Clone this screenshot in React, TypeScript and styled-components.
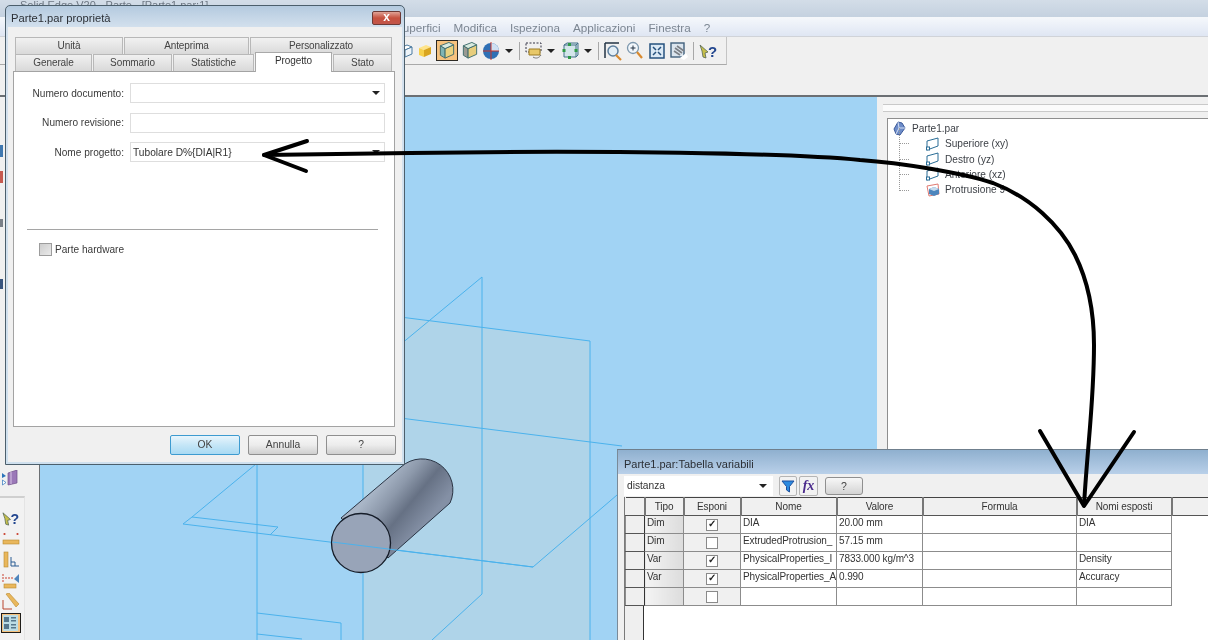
import React from "react";
import styled, { createGlobalStyle } from "styled-components";

const Global = createGlobalStyle`
  html, body { margin: 0; padding: 0; background: #f0f0f0; overflow: hidden; }
  #root { width: 1208px; height: 640px; }
`;

const Desktop = styled.div`
  position: relative;
  width: 1208px;
  height: 640px;
  overflow: hidden;
  display: flex;
  flex-direction: column;
  background: #f0f0f0;
  font-family: "Liberation Sans", Arial, sans-serif;
  font-size: 10px;
  color: #333;
  filter: blur(0.4px);
`;

/* ---------- main application chrome ---------- */
const AppTitle = styled.div`
  height: 17px;
  flex: none;
  padding: 0 0 0 20px;
  background: linear-gradient(#d3dde8, #c4d1df);
  border-bottom: 1px solid #f4f7fa;
  color: #6d7783;
  font-size: 11px;
  line-height: 11px;
  white-space: nowrap;
`;
const MenuBar = styled.div`
  height: 18px;
  flex: none;
  display: flex;
  align-items: center;
  gap: 13px;
  padding-left: 395px;
  background: linear-gradient(#f4f7fb, #dfe6f3);
  border-bottom: 1px solid #d0d3d8;
  color: #7c8692;
  font-size: 11.7px;
`;
const ToolBand = styled.div`
  height: 60px;
  flex: none;
  background: #f0f0f0;
  border-bottom: 2px solid #6b6f73;
  box-sizing: border-box;
`;
const Toolbar = styled.div`
  width: 727px;
  height: 28px;
  box-sizing: border-box;
  display: flex;
  justify-content: flex-end;
  align-items: center;
  padding-right: 7px;
  border-right: 1px solid #c4c4c4;
  border-bottom: 1px solid #a9a9a9;
`;
const Slot = styled.div<{ $w: number; $on?: boolean }>`
  width: ${(p) => p.$w}px;
  height: 21px;
  flex: none;
  box-sizing: border-box;
  display: flex;
  align-items: center;
  justify-content: center;
  ${(p) => p.$on && `background:#f6c27e;border:1px solid #2d2a24;margin:0 2px 0 1px;`}
`;
const Sep = styled.div`
  width: 1px;
  height: 18px;
  margin: 0 3px;
  flex: none;
  background: #a8a8a8;
`;
const Drop = styled.div`
  width: 14px;
  flex: none;
  display: flex;
  justify-content: center;
  &::after {
    content: "";
    border-left: 4px solid transparent;
    border-right: 4px solid transparent;
    border-top: 4px solid #222;
  }
`;

const Workspace = styled.div`
  flex: 1;
  min-height: 0;
  display: flex;
`;
const LeftStrip = styled.div`
  width: 40px;
  flex: none;
  box-sizing: border-box;
  display: flex;
  flex-direction: column;
  align-items: flex-start;
  border-right: 1px solid #6b6f73;
  background: #f0f0f0;
  padding-top: 48px;
`;
const EdgeMark = styled.div<{ $c: string; $h: number; $mb: number }>`
  width: 3px;
  height: ${(p) => p.$h}px;
  margin-bottom: ${(p) => p.$mb}px;
  background: ${(p) => p.$c};
  flex: none;
`;
const ToolPalette = styled.div`
  width: 25px;
  flex: 1;
  margin-top: 8px;
  box-sizing: border-box;
  border-top: 2px solid #cfcfcf;
  border-right: 1px solid #e4e4e4;
  display: flex;
  flex-direction: column;
  align-items: center;
  padding: 10px 3px 0 0;
  gap: 1px;
  background: #f2f2f2;
`;
const PaletteBtn = styled.div<{ $on?: boolean }>`
  width: 20px;
  height: 20px;
  flex: none;
  box-sizing: border-box;
  display: flex;
  align-items: center;
  justify-content: center;
  ${(p) => p.$on && `background:#f6c27e;border:1px solid #1f1c18;`}
`;
const CanvasArea = styled.div`
  flex: 1;
  min-width: 0;
  background: #a1d3f4;
  position: relative;
`;
const CanvasSvg = styled.svg`
  display: block;
  width: 100%;
  height: 100%;
`;
const SidePanel = styled.div`
  width: 331px;
  flex: none;
  box-sizing: border-box;
  padding: 7px 0 0 10px;
  display: flex;
  flex-direction: column;
  background: #f0f0f0;
`;
const Grip = styled.div`
  height: 6px;
  margin-left: -4px;
  margin-bottom: 6px;
  flex: none;
  border-top: 1px solid #c9c9c9;
  border-bottom: 1px solid #c9c9c9;
  background: #fbfbfb;
`;
const TreeBox = styled.div`
  flex: 1;
  background: #fff;
  border-top: 1px solid #8e8e8e;
  border-left: 1px solid #8e8e8e;
  padding: 2px 0 0 5px;
  position: relative;
  font-size: 10.1px;
  color: #3b3f45;
`;
const TreeRoot = styled.div`
  display: flex;
  align-items: center;
  gap: 6px;
  height: 15px;
`;
const TreeChild = styled.div`
  display: flex;
  align-items: center;
  gap: 5px;
  height: 15.4px;
  margin-left: 33px;
  position: relative;
  &::before {
    content: "";
    position: absolute;
    left: -27px;
    top: -8px;
    bottom: 7px;
    width: 9px;
    border-left: 1px dotted #999;
    border-bottom: 1px dotted #999;
  }
`;

/* ---------- properties dialog ---------- */
const Dialog = styled.div`
  position: absolute;
  left: 5px;
  top: 5px;
  width: 400px;
  height: 460px;
  box-sizing: border-box;
  border: 1px solid #4c5f6c;
  border-radius: 5px 5px 0 0;
  background: linear-gradient(#b4cadf, #d4e1ee 22px, #cfe0ee);
  padding: 0 2px 2px;
  display: flex;
  flex-direction: column;
`;
const DialogTitle = styled.div`
  height: 21px;
  flex: none;
  box-sizing: border-box;
  display: flex;
  align-items: center;
  justify-content: space-between;
  padding: 2px 1px 0 3px;
  font-size: 11.2px;
  color: #2b2f35;
`;
const CloseBtn = styled.div`
  width: 29px;
  height: 14px;
  box-sizing: border-box;
  border: 1px solid #6d3a36;
  border-radius: 2px;
  background: linear-gradient(#e0a397, #c6513f 50%, #c2564a);
  color: #fff;
  font-size: 12px;
  font-weight: bold;
  line-height: 11px;
  text-align: center;
`;
const DialogBody = styled.div`
  flex: 1;
  min-height: 0;
  background: #f0f0f0;
  padding: 10px 7px 7px 5px;
  display: flex;
  flex-direction: column;
`;
const TabRow = styled.div`
  display: flex;
  height: 17px;
  flex: none;
  padding: 0 1px 0 2px;
  gap: 1px;
  position: relative;
`;
const Tab = styled.div<{ $w: number; $active?: boolean }>`
  width: ${(p) => p.$w}px;
  flex: none;
  box-sizing: border-box;
  text-align: center;
  font-size: 10px;
  letter-spacing: -0.1px;
  color: #444;
  border: 1px solid #b8b8b8;
  border-bottom: none;
  line-height: 16px;
  background: linear-gradient(#f1f1f1, #d9d9d9);
  ${(p) =>
    p.$active &&
    `background:#fff;height:20px;margin-top:-2px;line-height:15px;position:relative;z-index:1;color:#333;border-color:#a9a9a9;`}
`;
const Page = styled.div`
  flex: 1;
  background: #fff;
  border: 1px solid #a3a3a3;
  padding: 11px 9px 0 13px;
  position: relative;
`;
const FieldGrid = styled.div`
  display: grid;
  grid-template-columns: 97px 255px;
  column-gap: 6px;
  row-gap: 9.5px;
  align-items: center;
`;
const FieldLabel = styled.div`
  text-align: right;
  font-size: 10.1px;
  color: #3a3a3a;
  white-space: nowrap;
`;
const Field = styled.div`
  height: 20px;
  box-sizing: border-box;
  border: 1px solid #dedede;
  padding: 0 2px;
  display: flex;
  align-items: center;
  font-size: 10.2px;
  color: #333;
  white-space: nowrap;
  &[data-drop="yes"]::after {
    content: "";
    margin-left: auto;
    border-left: 4px solid transparent;
    border-right: 4px solid transparent;
    border-top: 4px solid #222;
    margin-right: 2px;
  }
`;
const Divider = styled.div`
  height: 1px;
  background: #a5a5a5;
  margin: 67px 7px 0 0;
`;
const CheckRow = styled.div`
  margin: 13px 0 0 12px;
  display: flex;
  align-items: center;
  gap: 3px;
  font-size: 10.1px;
  color: #3a3a3a;
`;
const GreyCheck = styled.div`
  width: 13px;
  height: 13px;
  box-sizing: border-box;
  border: 1px solid #9c9c9c;
  background: linear-gradient(135deg, #cdcdcd, #eaeaea);
`;
const DialogButtons = styled.div`
  flex: none;
  display: flex;
  justify-content: flex-end;
  gap: 8px;
  padding-top: 8px;
  margin-right: -1px;
`;
const PushBtn = styled.div<{ $def?: boolean }>`
  width: 70px;
  height: 20px;
  box-sizing: border-box;
  border: 1px solid ${(p) => (p.$def ? "#3d9bd0" : "#8f8f8f")};
  border-radius: 2px;
  background: ${(p) =>
    p.$def
      ? "linear-gradient(#e8f5fc 0,#c5e6f7 50%,#a9daf3 100%)"
      : "linear-gradient(#f7f7f7,#ececec 50%,#cfcfcf)"};
  text-align: center;
  line-height: 18px;
  font-size: 10.3px;
  color: #444;
`;

/* ---------- variable table window ---------- */
const VarWindow = styled.div`
  position: absolute;
  left: 617px;
  top: 449px;
  width: 591px;
  height: 191px;
  box-sizing: border-box;
  border-left: 1px solid #7a8a98;
  border-top: 1px solid #6f7f8d;
  display: flex;
  flex-direction: column;
  background: #f0f0f0;
`;
const VarTitle = styled.div`
  height: 24px;
  flex: none;
  box-sizing: border-box;
  padding: 8px 0 0 6px;
  font-size: 11px;
  color: #2b2f35;
  background: linear-gradient(#8fb0cf, #b9d0e9);
`;
const VarTools = styled.div`
  height: 23px;
  flex: none;
  display: flex;
  align-items: center;
  padding-left: 6px;
`;
const Combo = styled.div`
  width: 149px;
  height: 20px;
  box-sizing: border-box;
  background: #fff;
  padding: 0 6px 0 3px;
  display: flex;
  align-items: center;
  justify-content: space-between;
  font-size: 10.2px;
  color: #333;
  margin-right: 6px;
  &::after {
    content: "";
    border-left: 4px solid transparent;
    border-right: 4px solid transparent;
    border-top: 4px solid #222;
  }
`;
const IconBtn = styled.div`
  width: 18px;
  height: 20px;
  margin-right: 2px;
  box-sizing: border-box;
  border: 1px solid #b5b5b5;
  border-radius: 2px;
  background: #f2f2f2;
  display: flex;
  align-items: center;
  justify-content: center;
`;
const FxBtn = styled(IconBtn)`
  width: 19px;
  font-family: "Liberation Serif", serif;
  font-style: italic;
  font-weight: bold;
  font-size: 14px;
  color: #4a2a8c;
`;
const HelpBtn = styled.div`
  width: 38px;
  height: 18px;
  margin-left: 5px;
  box-sizing: border-box;
  border: 1px solid #8f8f8f;
  border-radius: 3px;
  background: linear-gradient(#f7f7f7, #d4d4d4);
  text-align: center;
  line-height: 16px;
  font-size: 10.5px;
  color: #444;
`;
const GridArea = styled.div`
  flex: 1;
  margin-left: 6px;
  min-height: 0;
  border-left: 1px solid #7a7a7a;
  background: linear-gradient(90deg, #efefef 18px, #333 18px, #333 19px, #fff 19px);
`;
const VarTable = styled.table`
  border-collapse: collapse;
  table-layout: fixed;
  width: 584px;
  font-size: 10px;
  letter-spacing: -0.1px;
  color: #333;
`;
const HeadCell = styled.th<{ $plain?: boolean }>`
  height: 18px;
  padding: 0;
  font-weight: normal;
  text-align: center;
  box-sizing: border-box;
  border-top: 1px solid #444;
  border-bottom: 1px solid #555;
  border-right: ${(p) => (p.$plain ? "none" : "2px solid #777")};
  background: #f0f0f0;
`;
const Cell = styled.td<{ $kind?: "type" | "check" | "head" }>`
  height: 18px;
  padding: 0 2px;
  vertical-align: top;
  line-height: 14px;
  box-sizing: border-box;
  overflow: hidden;
  white-space: nowrap;
  border: 1px solid #8c8c8c;
  border-top: none;
  background: ${(p) =>
    p.$kind === "type"
      ? "linear-gradient(90deg,#f4f4f4,#dcdcdc)"
      : p.$kind === "check"
      ? "#f0f0f0"
      : p.$kind === "head"
      ? "#efefef"
      : "#fff"};
  ${(p) => p.$kind === "check" && "text-align:center;padding-top:3px;"}
  ${(p) => p.$kind === "head" && "border-right:1px solid #333;border-bottom:1px solid #555;"}
`;
const Tick = styled.span<{ $on?: boolean }>`
  display: inline-block;
  width: 10px;
  height: 10px;
  border: 1px solid #8a8a8a;
  background: #fff;
  position: relative;
  vertical-align: top;
  &::after {
    content: ${(p) => (p.$on ? '"✓"' : '""')};
    position: absolute;
    left: 1px;
    top: -2px;
    font-size: 10px;
    font-weight: bold;
    line-height: 12px;
    color: #222;
  }
`;
const Overlay = styled.svg`
  position: absolute;
  left: 0;
  top: 0;
  width: 1208px;
  height: 640px;
  pointer-events: none;
`;

/* ---------- icons ---------- */
const Cube = ({ top = "#ffe48a", left = "#f7d14c", right = "#d9a520", stroke = "none" }) => (
  <svg width="16" height="16" viewBox="0 0 16 16">
    <path d="M2 5 L9 2 L14 4 L7 7Z" fill={top} stroke={stroke} />
    <path d="M2 5 L7 7 L7 14 L2 12Z" fill={left} stroke={stroke} />
    <path d="M7 7 L14 4 L14 11 L7 14Z" fill={right} stroke={stroke} />
  </svg>
);
const ShadedBox = ({ front = "#e9d27f", side = "#7fb4b4" }) => (
  <svg width="18" height="19" viewBox="0 0 18 20">
    <path d="M2 5 L7 8 L7 18 L2 15Z" fill={side} stroke="#3f6d6d" />
    <path d="M7 8 L16 4 L16 14 L7 18Z" fill={front} stroke="#3f6d6d" />
    <path d="M2 5 L11 1.5 L16 4 L7 8Z" fill="#d8eadf" stroke="#3f6d6d" />
  </svg>
);
const Sphere = () => (
  <svg width="18" height="18" viewBox="0 0 18 18">
    <circle cx="9" cy="9" r="8" fill="#2f70b5" />
    <path d="M9 1 A8 8 0 0 1 17 9 L9 9Z" fill="#cfe0f2" />
    <path d="M9 0 V18 M1 9 H17" stroke="#c8362d" strokeWidth="1" />
  </svg>
);
const SelectBox = () => (
  <svg width="18" height="18" viewBox="0 0 18 18">
    <rect x="1" y="1" width="15" height="9" fill="none" stroke="#334" strokeDasharray="2 1.5" />
    <path d="M4 7 H15 V13 H4Z" fill="#e8c868" stroke="#9a7b22" />
    <path d="M8 15 C11 17 14 16 16 13" fill="none" stroke="#777" />
  </svg>
);
const GreenCube = () => (
  <svg width="18" height="18" viewBox="0 0 18 18">
    <path d="M3 3 H15 V15 H3Z M3 3 L6 1 H17 V13 L15 15 M15 3 L17 1" fill="#d4e6ea" stroke="#44708a" />
    <g fill="#2f9a45">
      <rect x="1.5" y="7" width="3" height="3" />
      <rect x="13.5" y="7" width="3" height="3" />
      <rect x="7" y="1" width="3" height="3" />
      <rect x="7" y="14" width="3" height="3" />
    </g>
  </svg>
);
const ZoomArea = () => (
  <svg width="18" height="20" viewBox="0 0 18 20">
    <path d="M1 2 H15 M1 2 V17" stroke="#234" strokeWidth="1.5" fill="none" />
    <circle cx="9" cy="10" r="5" fill="#e3eef6" stroke="#5d7f9e" strokeWidth="1.5" />
    <path d="M12 14 L17 19" stroke="#d98a2f" strokeWidth="2.2" />
  </svg>
);
const Magnifier = () => (
  <svg width="18" height="20" viewBox="0 0 18 20">
    <circle cx="7" cy="7" r="5.5" fill="#f2f7fb" stroke="#7c97ad" strokeWidth="1.3" />
    <path d="M4.5 7 H9.5 M7 4.5 V9.5" stroke="#234" />
    <path d="M11 11 L16 17" stroke="#d98a2f" strokeWidth="2.2" />
  </svg>
);
const Fit = () => (
  <svg width="16" height="16" viewBox="0 0 16 16">
    <rect x="1" y="1" width="14" height="14" fill="#dbe9f5" stroke="#26517e" strokeWidth="1.5" />
    <path d="M4 4 L7 7 M12 4 L9 7 M4 12 L7 9 M12 12 L9 9" stroke="#26517e" strokeWidth="1.5" />
  </svg>
);
const Spin = () => (
  <svg width="18" height="18" viewBox="0 0 18 18">
    <rect x="1" y="1" width="13" height="14" fill="#dbe5ee" stroke="#40607c" strokeWidth="1.4" />
    <path d="M5 6 L12 11 M4 9 L10 13 M7 4 L14 9" stroke="#7b7f85" strokeWidth="1.6" />
    <path d="M10 16 L16 11 L18 15 L14 18Z" fill="#fff" />
  </svg>
);
const HelpArrow = ({ size = 18 }) => (
  <svg width={size} height={size} viewBox="0 0 18 18">
    <path d="M1 3 L9 10 L6 11 L7 16 L4 15 L3 9Z" fill="#c7c04a" stroke="#565" strokeWidth="0.8" />
    <text x="9" y="15" fontSize="15" fontWeight="bold" fill="#22468f" fontFamily="Liberation Sans, sans-serif">
      ?
    </text>
  </svg>
);
const PurpleBook = () => (
  <svg width="16" height="16" viewBox="0 0 16 16">
    <path d="M6 3 L15 0 V13 L6 15Z" fill="#9b78b8" stroke="#6e4f8a" strokeWidth="0.7" />
    <path d="M9 2 V14" stroke="#d7c6e5" />
    <path d="M0 3 L4 6 L0 8Z" fill="#2a73ba" />
    <path d="M0.5 10 L4 12.5 L0.5 15Z" fill="#fff" stroke="#2a73ba" strokeWidth="0.7" />
  </svg>
);
const RulerA = () => (
  <svg width="18" height="16" viewBox="0 0 18 16">
    <rect x="1" y="9" width="16" height="4" fill="#e9b75c" stroke="#b98a30" strokeWidth="0.6" />
    <circle cx="2.5" cy="3" r="1.1" fill="#c9402f" />
    <circle cx="15.5" cy="3" r="1.1" fill="#c9402f" />
  </svg>
);
const RulerB = () => (
  <svg width="18" height="18" viewBox="0 0 18 18">
    <rect x="2" y="1" width="4" height="15" fill="#e9b75c" stroke="#b98a30" strokeWidth="0.6" />
    <path d="M9 6 V15 H17 M9 11 H13 V15" fill="none" stroke="#2a5d93" />
  </svg>
);
const RulerC = () => (
  <svg width="18" height="18" viewBox="0 0 18 18">
    <rect x="2" y="12" width="12" height="4" fill="#e9b75c" stroke="#b98a30" strokeWidth="0.6" />
    <path d="M1 2 V11 M3 6 H12" stroke="#c9402f" strokeDasharray="2 1" />
    <path d="M17 2 L12 7 L17 11Z" fill="#4f86bd" />
  </svg>
);
const RulerD = () => (
  <svg width="18" height="18" viewBox="0 0 18 18">
    <path d="M4 1 L7 0 L17 11 L14 14Z" fill="#e9b75c" stroke="#b98a30" strokeWidth="0.6" />
    <path d="M1 7 V16 H10" fill="none" stroke="#b9442f" />
  </svg>
);
const Matrix = () => (
  <svg width="15" height="16" viewBox="0 0 15 16">
    <rect width="15" height="16" fill="#bcdde5" />
    <g fill="#35566e" fillOpacity="0.75">
      <rect x="1" y="2" width="5" height="5" />
      <rect x="8" y="2" width="5" height="1.5" />
      <rect x="8" y="5" width="5" height="1.5" />
      <rect x="1" y="9" width="5" height="5" />
      <rect x="8" y="9" width="5" height="1.5" />
      <rect x="8" y="12" width="5" height="1.5" />
    </g>
  </svg>
);
const PartIcon = () => (
  <svg width="13" height="15" viewBox="0 0 13 15">
    <path d="M1 8 L5 1 L9 2 L12 7 L7 14 L3 13Z" fill="#6d8cc9" stroke="#3c5a99" />
    <path d="M5 1 L6 7 L3 13 M6 7 L12 7" fill="none" stroke="#d5e0f3" />
  </svg>
);
const PlaneIcon = () => (
  <svg width="14" height="14" viewBox="0 0 14 14">
    <path d="M1 4 L12 1 V9 L1 13Z" fill="#fff" stroke="#2a6d96" />
    <rect x="0.5" y="10" width="3" height="3" fill="#fff" stroke="#2a6d96" />
  </svg>
);
const ProtrusionIcon = () => (
  <svg width="14" height="14" viewBox="0 0 14 14">
    <path d="M1 3 L12 1 L13 11 L3 13Z" fill="#fff" stroke="#e07a72" />
    <path d="M3 6 L8 4 L13 6 V11 L8 13 L3 11Z" fill="#4d86bd" />
    <path d="M3 6 L8 4 L13 6 L8 8Z" fill="#c7dcee" />
  </svg>
);
const FilterIcon = () => (
  <svg width="14" height="14" viewBox="0 0 14 14">
    <path d="M1 2 H13 L8.5 7.5 V13 L5.5 11 V7.5Z" fill="#2c8be0" stroke="#1d4f9c" />
  </svg>
);

const rows: { tipo: string; on: boolean; nome: string; val: string; exp: string }[] = [
  { tipo: "Dim", on: true, nome: "DIA", val: "20.00 mm", exp: "DIA" },
  { tipo: "Dim", on: false, nome: "ExtrudedProtrusion_", val: "57.15 mm", exp: "" },
  { tipo: "Var", on: true, nome: "PhysicalProperties_I", val: "7833.000 kg/m^3", exp: "Density" },
  { tipo: "Var", on: true, nome: "PhysicalProperties_A", val: "0.990", exp: "Accuracy" },
  { tipo: "", on: false, nome: "", val: "", exp: "" },
];

const line = "#4bb2ec";

export default function App() {
  return (
    <Desktop>
      <Global />
      <AppTitle>Solid Edge V20 - Parte - [Parte1.par:1]</AppTitle>
      <MenuBar>
        <span>Superfici</span>
        <span>Modifica</span>
        <span>Ispeziona</span>
        <span>Applicazioni</span>
        <span>Finestra</span>
        <span>?</span>
      </MenuBar>
      <ToolBand>
        <Toolbar>
          <Slot $w={18}><Cube top="#fff" left="#dbe8f2" right="#eef4f9" stroke="#4a7aa0" /></Slot>
          <Slot $w={20}><Cube /></Slot>
          <Slot $w={22} $on><ShadedBox /></Slot>
          <Slot $w={20}><ShadedBox front="#e7cd7c" side="#9a9a92" /></Slot>
          <Slot $w={22}><Sphere /></Slot>
          <Drop />
          <Sep />
          <Slot $w={21}><SelectBox /></Slot>
          <Drop />
          <Slot $w={23}><GreenCube /></Slot>
          <Drop />
          <Sep />
          <Slot $w={22}><ZoomArea /></Slot>
          <Slot $w={22}><Magnifier /></Slot>
          <Slot $w={22}><Fit /></Slot>
          <Slot $w={22}><Spin /></Slot>
          <Sep />
          <Slot $w={22}><HelpArrow /></Slot>
        </Toolbar>
      </ToolBand>
      <Workspace>
        <LeftStrip>
          <EdgeMark $c="#3f78b0" $h={12} $mb={14} />
          <EdgeMark $c="#c65a50" $h={12} $mb={36} />
          <EdgeMark $c="#7a8088" $h={8} $mb={52} />
          <EdgeMark $c="#39557e" $h={10} $mb={179} />
          <PaletteBtn><PurpleBook /></PaletteBtn>
          <ToolPalette>
            <PaletteBtn><HelpArrow size={17} /></PaletteBtn>
            <PaletteBtn><RulerA /></PaletteBtn>
            <PaletteBtn><RulerB /></PaletteBtn>
            <PaletteBtn><RulerC /></PaletteBtn>
            <PaletteBtn><RulerD /></PaletteBtn>
            <PaletteBtn $on><Matrix /></PaletteBtn>
          </ToolPalette>
        </LeftStrip>
        <CanvasArea>
          <CanvasSvg viewBox="40 97 837 543" preserveAspectRatio="none">
            <path d="M400 317 L590 341 V640 H363 V440 H400Z" fill="#d2d6d2" fillOpacity="0.3" />
            <g fill="none" stroke={line} strokeWidth="1">
              <path d="M482 277 V594 L432 640" />
              <path d="M482 277 L192 517 L183 524 L533 567 L617 495" />
              <path d="M192 517 L278 527 L270 535" />
              <path d="M400 317 L590 341 V640" />
              <path d="M400 418 L622 446" />
              <path d="M257 440 V640" />
              <path d="M363 440 V640" />
              <path d="M257 613 L341 623 V640" />
              <path d="M257 634 L302 639" />
            </g>
            <defs>
              <linearGradient id="cyl" gradientUnits="userSpaceOnUse" x1="372" y1="492" x2="419" y2="531">
                <stop offset="0" stopColor="#a9b6c7" />
                <stop offset="0.3" stopColor="#8d99ab" />
                <stop offset="0.6" stopColor="#667184" />
                <stop offset="1" stopColor="#8490a5" />
              </linearGradient>
            </defs>
            <path
              d="M341 518 L401 467 A31 31 0 0 1 450 503 L388 558Z"
              fill="url(#cyl)"
              stroke="#2a3444"
              strokeWidth="1"
            />
            <ellipse
              cx="361"
              cy="543"
              rx="29.5"
              ry="29.5"
              fill="#98a4b8"
              stroke="#151c28"
              strokeWidth="1.3"
            />
            <path d="M332 542 L533 567" stroke={line} fill="none" />
          </CanvasSvg>
        </CanvasArea>
        <SidePanel>
          <Grip />
          <TreeBox>
            <TreeRoot>
              <PartIcon />
              <span>Parte1.par</span>
            </TreeRoot>
            <TreeChild>
              <PlaneIcon />
              <span>Superiore (xy)</span>
            </TreeChild>
            <TreeChild>
              <PlaneIcon />
              <span>Destro (yz)</span>
            </TreeChild>
            <TreeChild>
              <PlaneIcon />
              <span>Anteriore (xz)</span>
            </TreeChild>
            <TreeChild>
              <ProtrusionIcon />
              <span>Protrusione 9</span>
            </TreeChild>
          </TreeBox>
        </SidePanel>
      </Workspace>

      <Dialog>
        <DialogTitle>
          <span>Parte1.par proprietà</span>
          <CloseBtn>x</CloseBtn>
        </DialogTitle>
        <DialogBody>
          <TabRow>
            <Tab $w={108}>Unità</Tab>
            <Tab $w={125}>Anteprima</Tab>
            <Tab $w={142}>Personalizzato</Tab>
          </TabRow>
          <TabRow>
            <Tab $w={77}>Generale</Tab>
            <Tab $w={79}>Sommario</Tab>
            <Tab $w={81}>Statistiche</Tab>
            <Tab $w={77} $active>Progetto</Tab>
            <Tab $w={59}>Stato</Tab>
          </TabRow>
          <Page>
            <FieldGrid>
              <FieldLabel>Numero documento:</FieldLabel>
              <Field data-drop="yes" />
              <FieldLabel>Numero revisione:</FieldLabel>
              <Field />
              <FieldLabel>Nome progetto:</FieldLabel>
              <Field data-drop="yes">Tubolare D%{"{"}DIA|R1{"}"}</Field>
            </FieldGrid>
            <Divider />
            <CheckRow>
              <GreyCheck />
              <span>Parte hardware</span>
            </CheckRow>
          </Page>
          <DialogButtons>
            <PushBtn $def>OK</PushBtn>
            <PushBtn>Annulla</PushBtn>
            <PushBtn>?</PushBtn>
          </DialogButtons>
        </DialogBody>
      </Dialog>

      <VarWindow>
        <VarTitle>Parte1.par:Tabella variabili</VarTitle>
        <VarTools>
          <Combo>distanza</Combo>
          <IconBtn><FilterIcon /></IconBtn>
          <FxBtn>fx</FxBtn>
          <HelpBtn>?</HelpBtn>
        </VarTools>
        <GridArea>
          <VarTable>
            <colgroup>
              <col style={{ width: 19 }} />
              <col style={{ width: 39 }} />
              <col style={{ width: 57 }} />
              <col style={{ width: 96 }} />
              <col style={{ width: 86 }} />
              <col style={{ width: 154 }} />
              <col style={{ width: 95 }} />
              <col />
            </colgroup>
            <thead>
              <tr>
                <HeadCell />
                <HeadCell>Tipo</HeadCell>
                <HeadCell>Esponi</HeadCell>
                <HeadCell>Nome</HeadCell>
                <HeadCell>Valore</HeadCell>
                <HeadCell>Formula</HeadCell>
                <HeadCell>Nomi esposti</HeadCell>
                <HeadCell $plain />
              </tr>
            </thead>
            <tbody>
              {rows.map((r, i) => (
                <tr key={i}>
                  <Cell $kind="head" />
                  <Cell $kind="type">{r.tipo}</Cell>
                  <Cell $kind="check"><Tick $on={r.on} /></Cell>
                  <Cell>{r.nome}</Cell>
                  <Cell>{r.val}</Cell>
                  <Cell />
                  <Cell>{r.exp}</Cell>
                </tr>
              ))}
            </tbody>
          </VarTable>
        </GridArea>
      </VarWindow>

      <Overlay viewBox="0 0 1208 640">
        <g fill="none" stroke="#000" strokeWidth="4" strokeLinecap="round" strokeLinejoin="round">
          <path d="M264 155 L410 153 C600 150 790 153 860 160 C900 163 960 172 993 183 C1030 197 1060 225 1075 255 C1090 285 1094 320 1094 345 C1094 400 1088 440 1084 505" />
          <path d="M307 141 L264 155 L306 171" />
          <path d="M1040 431 L1084 506 L1134 432" />
        </g>
      </Overlay>
    </Desktop>
  );
}
